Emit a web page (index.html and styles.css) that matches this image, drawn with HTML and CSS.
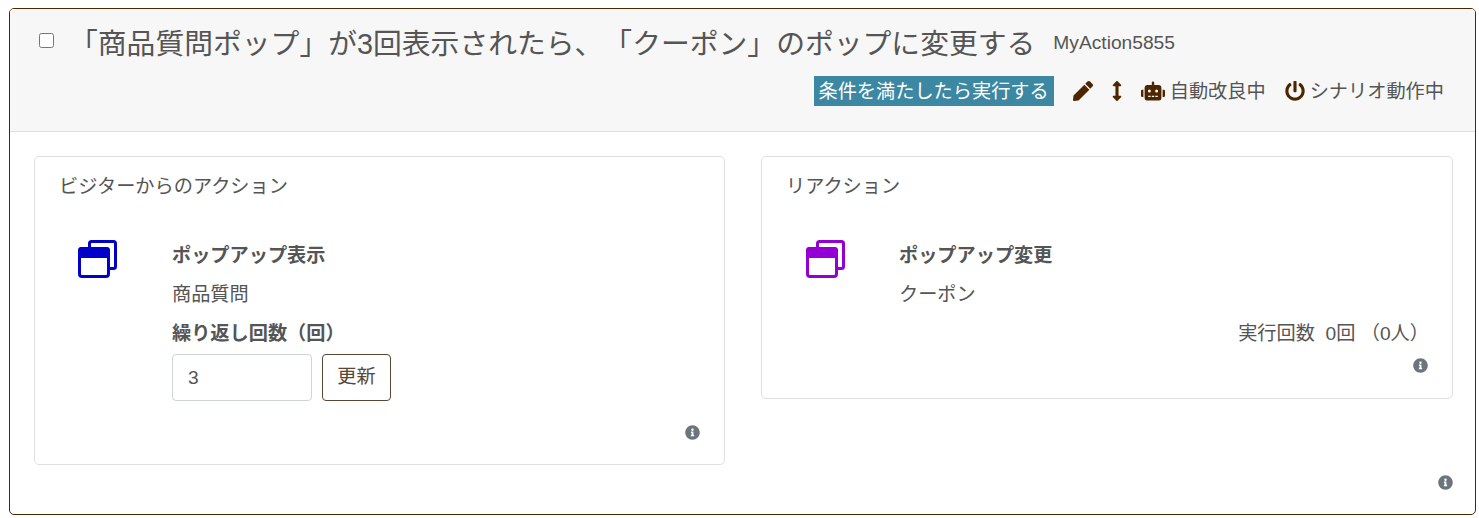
FILE: index.html
```html
<!DOCTYPE html>
<html lang="ja">

<head>
    <meta charset="UTF-8">
    <title>シナリオ</title>
    <link rel="stylesheet" href="styles.css">
</head>

<body>

    <div class="scenario">
        <div class="scenario-head">
            <div class="title-row">
                <input type="checkbox" class="select-box">
                <h1>「商品質問ポップ」が3回表示されたら、「クーポン」のポップに変更する</h1>
                <span class="action-id">MyAction5855</span>
            </div>
            <div class="status-row">
                <span class="badge">条件を満たしたら実行する</span>
                <svg class="icon pencil" viewBox="0 0 512 512"><path d="M290.74 93.24l128.02 128.02-277.99 277.99-114.14 12.6C11.35 513.54-1.56 500.62.14 485.34l12.7-114.22 277.9-277.88zm207.2-19.06l-60.11-60.11c-18.75-18.75-49.16-18.75-67.91 0l-56.55 56.55 128.02 128.02 56.55-56.55c18.75-18.76 18.75-49.16 0-67.91z"/></svg>
                <svg class="icon arrows" viewBox="0 0 256 512"><path d="M214.059 377.941H168V134.059h46.059c21.382 0 32.09-25.851 16.971-40.971L144.971 7.029c-9.373-9.373-24.568-9.373-33.941 0L24.971 93.088c-15.119 15.119-4.411 40.971 16.971 40.971H88v243.882H41.941c-21.382 0-32.09 25.851-16.971 40.971l86.059 86.059c9.373 9.373 24.568 9.373 33.941 0l86.059-86.059c15.12-15.119 4.412-40.971-16.97-40.971z"/></svg>
                <svg class="icon robot" viewBox="0 0 640 512"><path d="M32,224H64V416H32A31.96166,31.96166,0,0,1,0,384V256A31.96166,31.96166,0,0,1,32,224Zm512-48V448a64.06328,64.06328,0,0,1-64,64H160a64.06328,64.06328,0,0,1-64-64V176a79.974,79.974,0,0,1,80-80H288V32a32,32,0,0,1,64,0V96H464A79.974,79.974,0,0,1,544,176ZM264,256a40,40,0,1,0-40,40A39.997,39.997,0,0,0,264,256Zm-8,128H192v32h64Zm96,0H288v32h64ZM456,256a40,40,0,1,0-40,40A39.997,39.997,0,0,0,456,256Zm-8,128H384v32h64ZM640,256V384a31.96166,31.96166,0,0,1-32,32H576V224h32A31.96166,31.96166,0,0,1,640,256Z"/></svg>
                <span class="status-text">自動改良中</span>
                <svg class="icon power" viewBox="0 0 512 512"><path d="M400 54.1c63 45 104 118.6 104 201.9 0 136.8-110.8 247.7-247.5 248C120 504.3 8.2 393 8 256.4 7.9 173.1 48.9 99.3 111.8 54.2c11.7-8.3 28-4.8 35 7.7L162.6 90c5.9 10.5 3.1 23.8-6.6 31-41.5 30.8-68 79.6-68 134.9-.1 92.3 74.5 168.1 168 168.1 91.6 0 168.6-74.2 168-169.1-.3-51.8-24.7-101.8-68.1-134-9.7-7.2-12.4-20.5-6.5-30.9l15.8-28.1c7-12.4 23.2-16.1 34.8-7.8zM296 264V24c0-13.3-10.7-24-24-24h-32c-13.3 0-24 10.7-24 24v240c0 13.3 10.7 24 24 24h32c13.3 0 24-10.7 24-24z"/></svg>
                <span class="status-text">シナリオ動作中</span>
            </div>
        </div>

        <div class="scenario-body">
            <div class="columns">
                <div class="panel">
                    <div class="panel-title">ビジターからのアクション</div>
                    <div class="panel-row">
                        <svg class="popup-icon visitor" viewBox="0 0 39 38">
                            <path class="back" d="M11.5 7V3.5a2 2 0 0 1 2-2h22a2 2 0 0 1 2 2v23a2 2 0 0 1-2 2h-4"/>
                            <rect class="front" x="1.5" y="8.5" width="29" height="28" rx="2.5"/>
                            <path class="band" d="M3.5 7h25a3.5 3.5 0 0 1 3.5 3.5V18H0v-7.5A3.5 3.5 0 0 1 3.5 7z"/>
                        </svg>
                        <div class="panel-text">
                            <div class="item-name">ポップアップ表示</div>
                            <div class="item-value">商品質問</div>
                            <label class="item-name" for="repeatCount">繰り返し回数（回）</label>
                            <div class="count-form">
                                <input type="text" id="repeatCount" class="count-input" value="3">
                                <button type="button" class="update-btn">更新</button>
                            </div>
                        </div>
                    </div>
                    <div class="info-row visitor-info">
                        <svg class="info" viewBox="0 0 512 512"><path d="M256 8C119.043 8 8 119.083 8 256c0 136.997 111.043 248 248 248s248-111.003 248-248C504 119.083 392.957 8 256 8zm0 110c23.196 0 42 18.804 42 42s-18.804 42-42 42-42-18.804-42-42 18.804-42 42-42zm56 254c0 6.627-5.373 12-12 12h-88c-6.627 0-12-5.373-12-12v-24c0-6.627 5.373-12 12-12h12v-64h-12c-6.627 0-12-5.373-12-12v-24c0-6.627 5.373-12 12-12h64c6.627 0 12 5.373 12 12v100h12c6.627 0 12 5.373 12 12v24z"/></svg>
                    </div>
                </div>

                <div class="panel">
                    <div class="panel-title">リアクション</div>
                    <div class="panel-row reaction-row">
                        <svg class="popup-icon reaction" viewBox="0 0 39 38">
                            <path class="back" d="M11.5 7V3.5a2 2 0 0 1 2-2h22a2 2 0 0 1 2 2v23a2 2 0 0 1-2 2h-4"/>
                            <rect class="front" x="1.5" y="8.5" width="29" height="28" rx="2.5"/>
                            <path class="band" d="M3.5 7h25a3.5 3.5 0 0 1 3.5 3.5V18H0v-7.5A3.5 3.5 0 0 1 3.5 7z"/>
                        </svg>
                        <div class="panel-text">
                            <div class="item-name">ポップアップ変更</div>
                            <div class="item-value">クーポン</div>
                        </div>
                    </div>
                    <div class="run-count">実行回数&nbsp;&nbsp;0回 （0人）</div>
                    <div class="info-row">
                        <svg class="info" viewBox="0 0 512 512"><path d="M256 8C119.043 8 8 119.083 8 256c0 136.997 111.043 248 248 248s248-111.003 248-248C504 119.083 392.957 8 256 8zm0 110c23.196 0 42 18.804 42 42s-18.804 42-42 42-42-18.804-42-42 18.804-42 42-42zm56 254c0 6.627-5.373 12-12 12h-88c-6.627 0-12-5.373-12-12v-24c0-6.627 5.373-12 12-12h12v-64h-12c-6.627 0-12-5.373-12-12v-24c0-6.627 5.373-12 12-12h64c6.627 0 12 5.373 12 12v100h12c6.627 0 12 5.373 12 12v24z"/></svg>
                    </div>
                </div>
            </div>
            <div class="info-row scenario-info">
                <svg class="info" viewBox="0 0 512 512"><path d="M256 8C119.043 8 8 119.083 8 256c0 136.997 111.043 248 248 248s248-111.003 248-248C504 119.083 392.957 8 256 8zm0 110c23.196 0 42 18.804 42 42s-18.804 42-42 42-42-18.804-42-42 18.804-42 42-42zm56 254c0 6.627-5.373 12-12 12h-88c-6.627 0-12-5.373-12-12v-24c0-6.627 5.373-12 12-12h12v-64h-12c-6.627 0-12-5.373-12-12v-24c0-6.627 5.373-12 12-12h64c6.627 0 12 5.373 12 12v100h12c6.627 0 12 5.373 12 12v24z"/></svg>
            </div>
        </div>
    </div>

</body>

</html>
```

FILE: styles.css
```css
* {
    box-sizing: border-box;
}

body {
    margin: 8px 3px 0 9px;
    background-color: #fff;
    font-family: "Liberation Sans", "Noto Sans CJK JP", sans-serif;
    font-size: 19.2px;
    line-height: 28.8px;
    color: #555;
    text-spacing-trim: space-all;
}

.scenario {
    height: 507px;
    border: 1px solid #4d2600;
    border-radius: 5px;
    overflow: hidden;
}

.scenario-head {
    height: 123px;
    padding: 12px 31px 0 29px;
    background-color: #f7f7f7;
    border-bottom: 1px solid #dfdfdf;
}

.title-row {
    display: flex;
    align-items: center;
    height: 43px;
}

.select-box {
    width: 15px;
    height: 15px;
    margin: 0 15px 4px 0;
}

h1 {
    margin: 0;
    padding-top: 3px;
    font-size: 28.8px;
    font-weight: normal;
    line-height: 43px;
}

.action-id {
    margin-left: 18px;
    padding-top: 1px;
}

.status-row {
    display: flex;
    justify-content: flex-end;
    align-items: center;
    margin-top: 12px;
}

.badge {
    padding: 0 5px;
    height: 30px;
    line-height: 32px;
    background-color: #3c87a2;
    color: #fff;
}

.icon {
    height: 20px;
    fill: #4d2600;
    flex-shrink: 0;
}

.pencil {
    width: 20px;
    margin-left: 19px;
}

.arrows {
    width: 14px;
    margin-left: 17px;
}

.robot {
    width: 24px;
    margin-left: 17px;
}

.power {
    width: 20px;
    margin-left: 19px;
}

.status-text {
    margin-left: 5px;
    padding-top: 2px;
}

.scenario-body {
    padding: 24px 21px 0 24px;
}

.columns {
    display: grid;
    grid-template-columns: 691px 692px;
    gap: 36px;
    align-items: start;
}

.panel {
    border: 1px solid #dfdfdf;
    border-radius: 5px;
    padding: 16px 24px 0;
}

.panel-title {
    height: 28.8px;
}

.panel-row {
    display: flex;
    margin-top: 40px;
    padding-left: 19px;
}

.reaction-row {
    padding-left: 20px;
}

.popup-icon {
    width: 39px;
    height: 38px;
    margin: -2px 55px 0 0;
    flex-shrink: 0;
}

.reaction-row .popup-icon {
    margin-right: 54px;
}

.popup-icon .back,
.popup-icon .front {
    fill: none;
    stroke-width: 3;
}

.popup-icon.visitor .back,
.popup-icon.visitor .front {
    stroke: #0000c8;
}

.popup-icon.visitor .band {
    fill: #0000c8;
}

.popup-icon.reaction .back,
.popup-icon.reaction .front {
    stroke: #9400d3;
}

.popup-icon.reaction .band {
    fill: #9400d3;
}

.item-name {
    display: block;
    font-weight: bold;
}

.item-value {
    margin: 10px 0 11px;
}

.count-form {
    display: flex;
    gap: 10px;
    margin-top: 5px;
}

.count-input {
    width: 140px;
    height: 47px;
    padding: 0 15px;
    border: 1px solid #ced4da;
    border-radius: 4px;
    font: inherit;
    color: #555;
}

.update-btn {
    width: 69px;
    height: 47px;
    padding: 0;
    background: #fff;
    border: 1px solid #5a4632;
    border-radius: 4px;
    font: inherit;
    color: #5a4632;
}

.run-count {
    margin-right: -1px;
    text-align: right;
}

.info-row {
    display: flex;
    justify-content: flex-end;
    margin-top: 9px;
    padding-bottom: 25px;
}

.visitor-info {
    margin-top: 24px;
    padding-bottom: 24px;
}

.scenario-info {
    margin-top: 10px;
    padding: 0 1px 0 0;
}

.info {
    width: 15px;
    height: 15px;
    fill: #6c757d;
}
```
